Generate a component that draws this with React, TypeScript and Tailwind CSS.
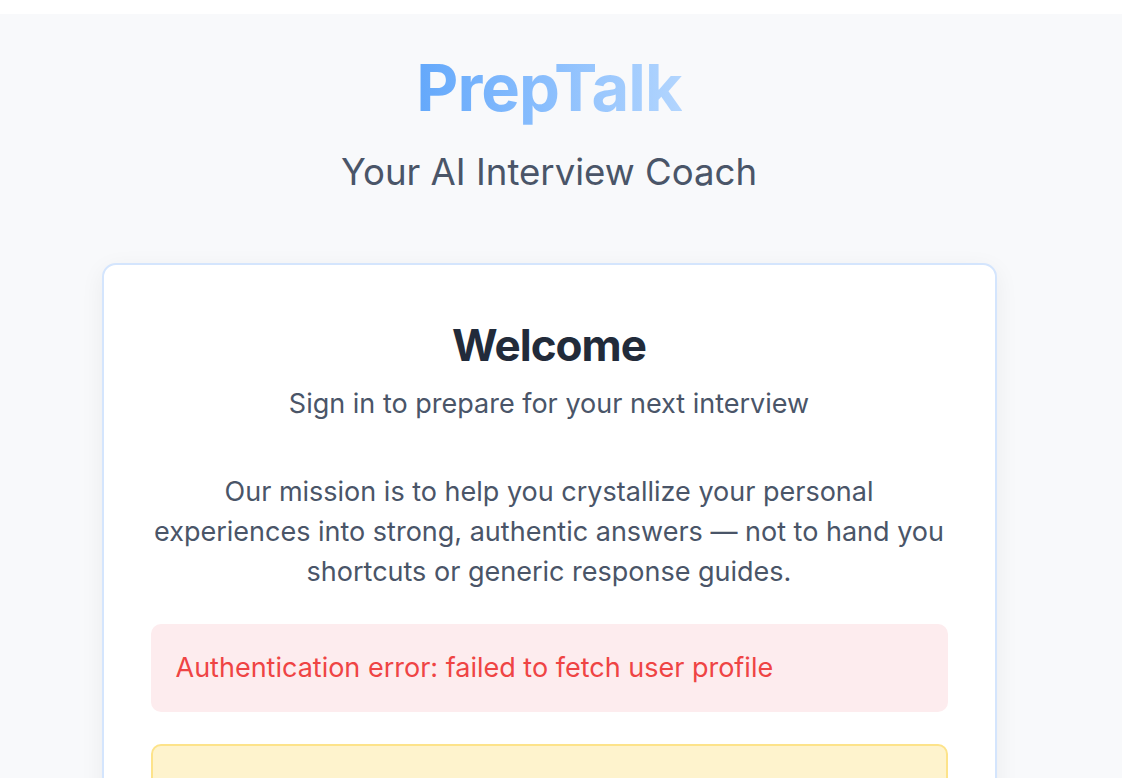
export default function App() {
  return (
    <div className="min-h-screen bg-white font-['Inter','Noto_Sans',sans-serif]">
      <div className="h-[14px] bg-white" />
      <main className="min-h-[764px] bg-[#f8f9fb] flex flex-col items-center pr-[24px]">
        <header className="flex flex-col items-center pt-[36px]">
          <h1 className="text-[65px] leading-[76px] font-bold tracking-[-1px] bg-gradient-to-r from-[#63a8fb] to-[#b2d5fe] bg-clip-text text-transparent">
            PrepTalk
          </h1>
          <p className="mt-[24px] text-[36.6px] leading-[44px] text-[#4a5568]">Your AI Interview Coach</p>
        </header>

        <section className="mt-[69px] w-[895px] bg-white border-2 border-[#d4e5fd] rounded-[14px] shadow-[0_6px_24px_rgba(15,23,42,0.06)] px-[47px] pt-[52px] pb-12 text-center">
          <h2 className="text-[44px] leading-[56px] font-bold tracking-[-1px] text-[#222b3a]">Welcome</h2>
          <p className="mt-[13px] text-[27px] leading-[36px] text-[#4a5568]">Sign in to prepare for your next interview</p>

          <p className="mt-[50px] text-[27px] leading-[40px] text-[#4a5568]">
            Our mission is to help you crystallize your personal experiences into strong, authentic answers — not to hand you shortcuts or generic response guides.
          </p>

          <div className="mt-[32px] h-[88px] rounded-[10px] bg-[#fdecee] flex items-center px-[25px] text-left">
            <span className="text-[27px] text-[#ef4444]">Authentication error: failed to fetch user profile</span>
          </div>

          <div className="mt-[32px] h-[120px] rounded-[10px] bg-[#fef3cd] border-2 border-[#fde38a]" />
        </section>
      </main>
    </div>
  );
}
